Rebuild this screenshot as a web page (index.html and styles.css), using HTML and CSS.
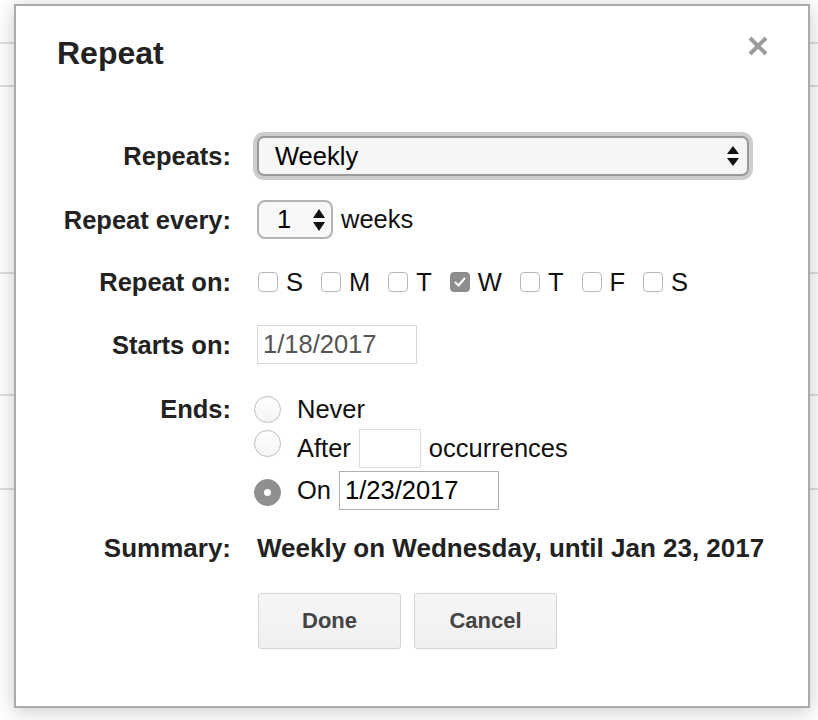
FILE: index.html
```html
<!DOCTYPE html>
<html lang="en">
<head>
<meta charset="utf-8">
<title>Repeat</title>
<link rel="stylesheet" href="styles.css">
</head>
<body>
<div class="page-bg">
  <div class="bg-row h42"></div>
  <div class="bg-row h41"></div>
  <div class="bg-row h185"></div>
  <div class="bg-row h120"></div>
  <div class="bg-row h92"></div>
</div>

<div class="dialog" role="dialog" aria-label="Repeat">
  <div class="header">
    <h1 class="title">Repeat</h1>
    <button class="close" aria-label="Close">
      <svg width="20" height="20" viewBox="0 0 20 20"><path d="M2 2 L18 18 M18 2 L2 18" stroke="#9c9c9c" stroke-width="4" stroke-linecap="butt" fill="none"/></svg>
    </button>
  </div>

  <div class="row row-repeats">
    <div class="label">Repeats:</div>
    <div class="value">
      <div class="select">
        <span>Weekly</span>
        <svg width="12" height="20" viewBox="0 0 12 20"><polygon points="6,0 12,8 0,8" fill="#111"/><polygon points="0,12 12,12 6,20" fill="#111"/></svg>
      </div>
    </div>
  </div>

  <div class="row row-every">
    <div class="label">Repeat every:</div>
    <div class="value inline">
      <div class="spinner">
        <span>1</span>
        <svg width="12" height="22" viewBox="0 0 12 22"><polygon points="6,0 12,9 0,9" fill="#111"/><polygon points="0,13 12,13 6,22" fill="#111"/></svg>
      </div>
      <span class="unit">weeks</span>
    </div>
  </div>

  <div class="row row-on">
    <div class="label">Repeat on:</div>
    <div class="value days">
      <span class="day"><span class="cb"></span>S</span>
      <span class="day"><span class="cb"></span>M</span>
      <span class="day"><span class="cb"></span>T</span>
      <span class="day"><span class="cb checked"><svg width="20" height="20" viewBox="0 0 20 20"><polyline points="5.5,10.5 8.5,13.5 14.5,6.5" stroke="#fff" stroke-width="2" fill="none" stroke-linecap="round" stroke-linejoin="round"/></svg></span>W</span>
      <span class="day"><span class="cb"></span>T</span>
      <span class="day"><span class="cb"></span>F</span>
      <span class="day"><span class="cb"></span>S</span>
    </div>
  </div>

  <div class="row row-starts">
    <div class="label">Starts on:</div>
    <div class="value"><input class="field field-start" type="text" value="1/18/2017" readonly></div>
  </div>

  <div class="row row-ends">
    <div class="label ends-label">Ends:</div>
    <div class="value ends">
      <div class="end-line line-never"><span class="radio"></span>Never</div>
      <div class="end-line line-after"><span class="radio top"></span>After<input class="field field-count" type="text" value="" readonly>occurrences</div>
      <div class="end-line line-on"><span class="radio selected"></span>On<input class="field field-end" type="text" value="1/23/2017" readonly></div>
    </div>
  </div>

  <div class="row row-summary">
    <div class="label summary-label">Summary:</div>
    <div class="value summary">Weekly on Wednesday, until Jan 23, 2017</div>
  </div>

  <div class="buttons">
    <button class="btn">Done</button>
    <button class="btn">Cancel</button>
  </div>
</div>
</body>
</html>
```

FILE: styles.css
```css
html, body {
  margin: 0;
  padding: 0;
  background: #ffffff;
  width: 818px;
  height: 720px;
  overflow: hidden;
  font-family: "Liberation Sans", Arial, sans-serif;
}

.page-bg {
  width: 818px;
}
.bg-row {
  border-bottom: 2px solid #dedede;
}
.h42 { height: 42px; }
.h41 { height: 41px; }
.h185 { height: 185px; }
.h120 { height: 120px; }
.h92 { height: 92px; }

.dialog {
  position: absolute;
  left: 14px;
  top: 4px;
  width: 796px;
  height: 704px;
  box-sizing: border-box;
  border: 2px solid #ababab;
  background: #ffffff;
  box-shadow: 0 3px 18px rgba(0, 0, 0, 0.22);
  padding: 31px 40px 0 41px;
  color: #222;
}

.header {
  display: flex;
  justify-content: space-between;
  align-items: flex-start;
  height: 32px;
}
.title {
  margin: 0;
  font-size: 32px;
  line-height: 32px;
  font-weight: bold;
  color: #222;
}
.close {
  border: 0;
  padding: 0;
  margin: -1px 0 0 0;
  background: none;
  width: 20px;
  height: 20px;
  display: block;
}
.close svg { display: block; }

.row {
  display: grid;
  grid-template-columns: 174px 1fr;
  column-gap: 26px;
  align-items: center;
  font-size: 25.5px;
}
.label {
  text-align: right;
  font-weight: bold;
  color: #222;
  line-height: 30px;
  white-space: nowrap;
}
.value {
  color: #111;
}

.row-repeats { margin-top: 67px; height: 40px; }
.row-every { margin-top: 24px; height: 39px; }
.row-on { margin-top: 28px; height: 30px; }
.row-starts { margin-top: 28px; height: 39px; }
.row-ends { margin-top: 28px; align-items: start; }
.row-summary { margin-top: 23px; }

.select {
  width: 492px;
  height: 40px;
  box-sizing: border-box;
  border: 2px solid #9a9a9a;
  border-radius: 7px;
  background: #f6f6f6;
  box-shadow: 0 0 0 4px #cdcdcd;
  display: flex;
  justify-content: space-between;
  align-items: center;
  padding: 0 8px 0 16px;
  color: #000;
}
.select svg { display: block; }

.inline {
  display: flex;
  align-items: center;
}
.spinner {
  width: 76px;
  height: 39px;
  box-sizing: border-box;
  border: 2px solid #b4b4b4;
  border-radius: 8px;
  background: #f8f8f8;
  display: flex;
  justify-content: space-between;
  align-items: center;
  padding: 0 6px 0 18px;
  color: #000;
}
.spinner svg { display: block; }
.unit {
  margin-left: 8px;
  color: #111;
}

.days {
  display: flex;
  align-items: center;
  gap: 18px;
  margin-left: 1px;
  line-height: 30px;
}
.day {
  display: flex;
  align-items: center;
}
.cb {
  width: 20px;
  height: 20px;
  box-sizing: border-box;
  border: 1px solid #b9b9b9;
  border-radius: 4px;
  background: #fff;
  margin-right: 8px;
  display: block;
}
.cb.checked {
  background: #8e8e8e;
  border-color: #8a8a8a;
}
.cb.checked svg {
  display: block;
  margin: -1px;
}

.field {
  box-sizing: border-box;
  height: 39px;
  border: 1px solid #d8d8d8;
  border-radius: 0;
  background: #fff;
  font-family: "Liberation Sans", Arial, sans-serif;
  font-size: 25.5px;
  padding: 0 0 0 5px;
  margin: 0;
  outline: none;
  display: block;
}
.field-start {
  width: 160px;
  color: #555;
}
.field-count {
  width: 62px;
  margin: 0 8px;
  border-color: #dcdcdc;
}
.field-end {
  width: 160px;
  margin-left: 8px;
  color: #000;
  border-color: #b0b0b0;
}

.ends-label { line-height: 34px; }
.ends {
  display: flex;
  flex-direction: column;
  gap: 3px;
}
.end-line {
  display: flex;
  align-items: center;
  color: #111;
}
.line-never { height: 34px; line-height: 34px; }
.line-after, .line-on { height: 39px; }

.radio {
  width: 27px;
  height: 27px;
  box-sizing: border-box;
  border: 1px solid #bdbdbd;
  border-radius: 50%;
  background: linear-gradient(#ffffff, #f4f4f4);
  margin: 0 16px 0 -3px;
  display: flex;
  align-items: center;
  justify-content: center;
  flex: none;
}
.radio.top {
  align-self: flex-start;
  margin-top: 1px;
}
.radio.selected {
  background: #8f8f8f;
  border-color: #8a8a8a;
  margin-top: 3px;
}
.radio.selected::after {
  content: "";
  width: 7px;
  height: 7px;
  border-radius: 50%;
  background: #fff;
}

.summary-label {
  font-size: 26px;
}
.summary {
  font-weight: bold;
  font-size: 26px;
  color: #222;
  line-height: 30px;
  white-space: nowrap;
}

.buttons {
  display: flex;
  gap: 13px;
  margin: 30px 0 0 201px;
}
.btn {
  width: 143px;
  height: 56px;
  box-sizing: border-box;
  border: 1px solid #d3d3d3;
  border-radius: 3px;
  background: linear-gradient(#f6f6f6, #f0f0f0);
  font-family: "Liberation Sans", Arial, sans-serif;
  font-size: 22px;
  font-weight: bold;
  color: #444;
  padding: 0;
}
```
